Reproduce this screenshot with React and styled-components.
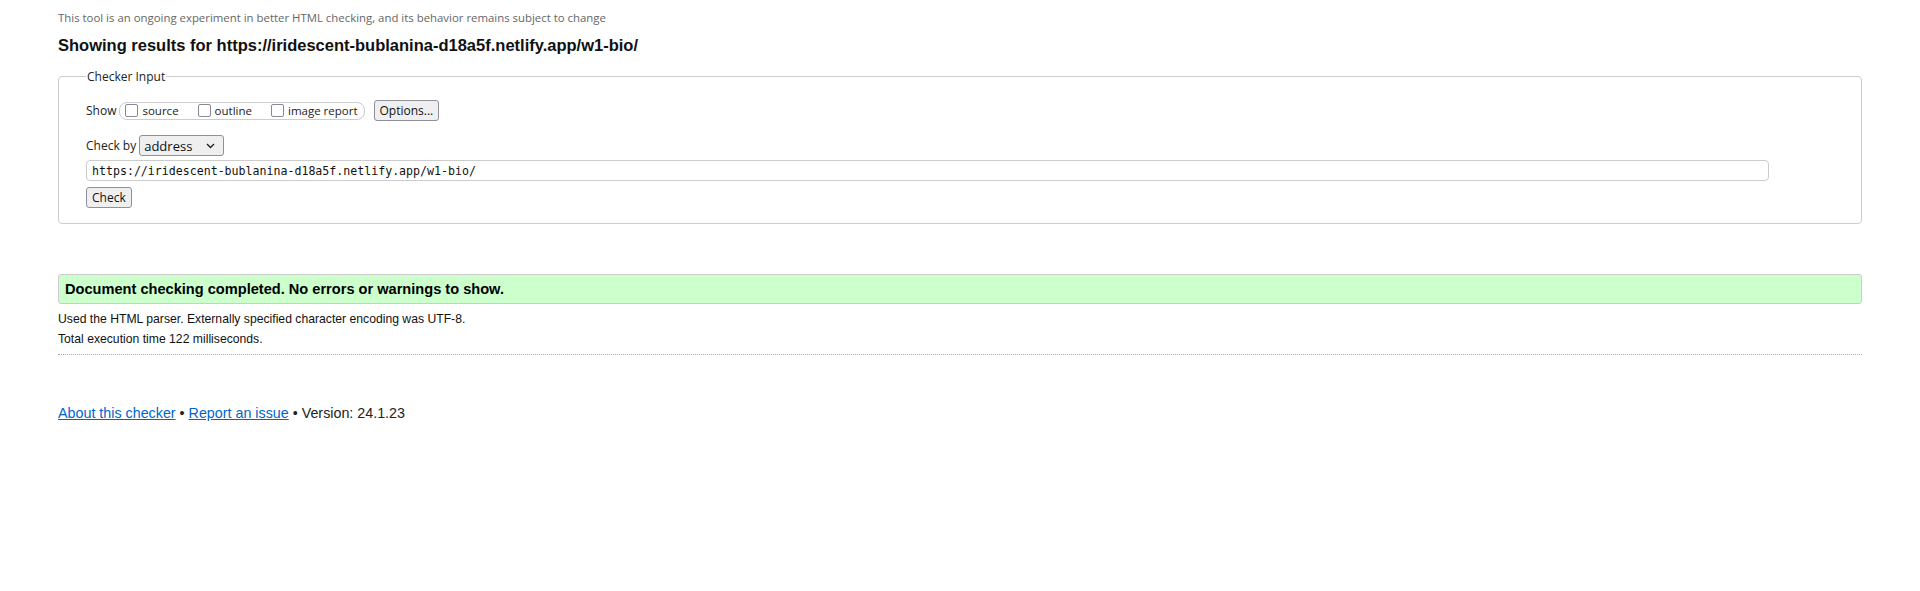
import styled, { createGlobalStyle } from 'styled-components';

const GlobalStyle = createGlobalStyle`
  html, body {
    margin: 0;
    padding: 0;
    background: #fff;
    color: #000;
  }
`

const Page = styled.div`
  padding: 0 58px;
  font-family: "Liberation Sans", Arial, sans-serif;
`

const Note = styled.p`
  margin: 0;
  padding-top: 10px;
  font-family: "Open Sans", "Noto Sans", sans-serif;
  font-size: 11.4px;
  line-height: 16px;
  color: #666;
`

const Title = styled.h1`
  margin: 8px 0 0;
  font-size: 16.5px;
  line-height: 22px;
  font-weight: bold;
  color: #111;
`

const Fieldset = styled.fieldset`
  margin: 12px 0 0;
  padding: 6px 22px 15px 27px;
  border: 1px solid #ccc;
  border-radius: 4px;
  font-family: "Open Sans", "Noto Sans", sans-serif;
  font-size: 12px;
`

const Legend = styled.legend`
  padding: 0 1px;
  margin-left: 0;
  font-size: 12px;
  color: #222;
`

const Row = styled.div`
  display: flex;
  align-items: center;
  margin-top: ${p => p.$top || 0}px;
`

const Label = styled.span`
  color: #222;
  margin-right: 3px;
`

const Group = styled.div`
  display: flex;
  align-items: center;
  height: 16px;
  padding: 0 6px 0 5px;
  border: 1px solid #ccc;
  border-radius: 8px;
  margin-right: 9px;
`

const Check = styled.input.attrs({ type: 'checkbox' })`
  appearance: none;
  margin: 0 4px 0 0;
  width: 13px;
  height: 13px;
  border: 1px solid #8a8797;
  border-radius: 2px;
  background: #fff;
`

const CheckText = styled.label`
  font-size: 11.5px;
  color: #222;
  margin-right: ${p => p.$space || 0}px;
`

const Button = styled.button`
  font-family: "Open Sans", "Noto Sans", sans-serif;
  font-size: 12px;
  line-height: 15px;
  padding: 2px 5px;
  color: #111;
  background: #efefef;
  border: 1px solid #8f8f9d;
  border-radius: 3px;
`

const Select = styled.div`
  display: flex;
  align-items: center;
  justify-content: space-between;
  box-sizing: border-box;
  width: 85px;
  height: 21px;
  padding: 0 8px 0 4px;
  background: #efefef;
  border: 1px solid #8f8f9d;
  border-radius: 3px;
  font-size: 13px;
  color: #111;
`

const UrlInput = styled.input`
  display: block;
  box-sizing: border-box;
  width: 1683px;
  height: 21px;
  margin-top: 4px;
  padding: 0 5px;
  border: 1px solid #ccc;
  border-radius: 4px;
  font-family: "DejaVu Sans Mono", "Liberation Mono", monospace;
  font-size: 11.6px;
  color: #111;
  outline: none;
`

const Success = styled.div`
  margin: 50px 0 5px;
  box-sizing: border-box;
  height: 30px;
  padding: 0 6px;
  display: flex;
  align-items: center;
  background: #ccffcc;
  border: 1px solid #ccc;
  border-radius: 3px;
  font-size: 14.6px;
  font-weight: bold;
  color: #000;
`

const Info = styled.p`
  margin: 0;
  font-size: 12.2px;
  line-height: 20px;
  color: #111;
`

const Rule = styled.hr`
  margin: 5px 0 0;
  border: 0;
  border-top: 1px dotted #aaa;
  height: 0;
`

const Footer = styled.p`
  margin: 49px 0 0;
  font-size: 14.3px;
  line-height: 18px;
  color: #222;

  a {
    color: #0066cc;
    text-decoration: underline;
  }
`

export default function App() {
  return (
    <>
      <GlobalStyle />
      <Page>
        <Note>This tool is an ongoing experiment in better HTML checking, and its behavior remains subject to change</Note>
        <Title>Showing results for https://iridescent-bublanina-d18a5f.netlify.app/w1-bio/</Title>

        <Fieldset>
          <Legend>Checker Input</Legend>
          <Row $top={9}>
            <Label>Show</Label>
            <Group>
              <Check id="source" />
              <CheckText htmlFor="source" $space={19}>source</CheckText>
              <Check id="outline" />
              <CheckText htmlFor="outline" $space={19}>outline</CheckText>
              <Check id="image" />
              <CheckText htmlFor="image">image report</CheckText>
            </Group>
            <Button>Options...</Button>
          </Row>
          <Row $top={14}>
            <Label>Check by</Label>
            <Select>
              <span>address</span>
              <svg width="9" height="6" viewBox="0 0 9 6">
                <path d="M1 1l3.5 3.5L8 1" fill="none" stroke="#222" strokeWidth="1.4" />
              </svg>
            </Select>
          </Row>
          <UrlInput readOnly value="https://iridescent-bublanina-d18a5f.netlify.app/w1-bio/" />
          <Row $top={6}>
            <Button>Check</Button>
          </Row>
        </Fieldset>

        <Success>Document checking completed. No errors or warnings to show.</Success>
        <Info>Used the HTML parser. Externally specified character encoding was UTF-8.</Info>
        <Info>Total execution time 122 milliseconds.</Info>
        <Rule />

        <Footer>
          <a href="#about">About this checker</a> • <a href="#issue">Report an issue</a> • Version: 24.1.23
        </Footer>
      </Page>
    </>
  )
}
